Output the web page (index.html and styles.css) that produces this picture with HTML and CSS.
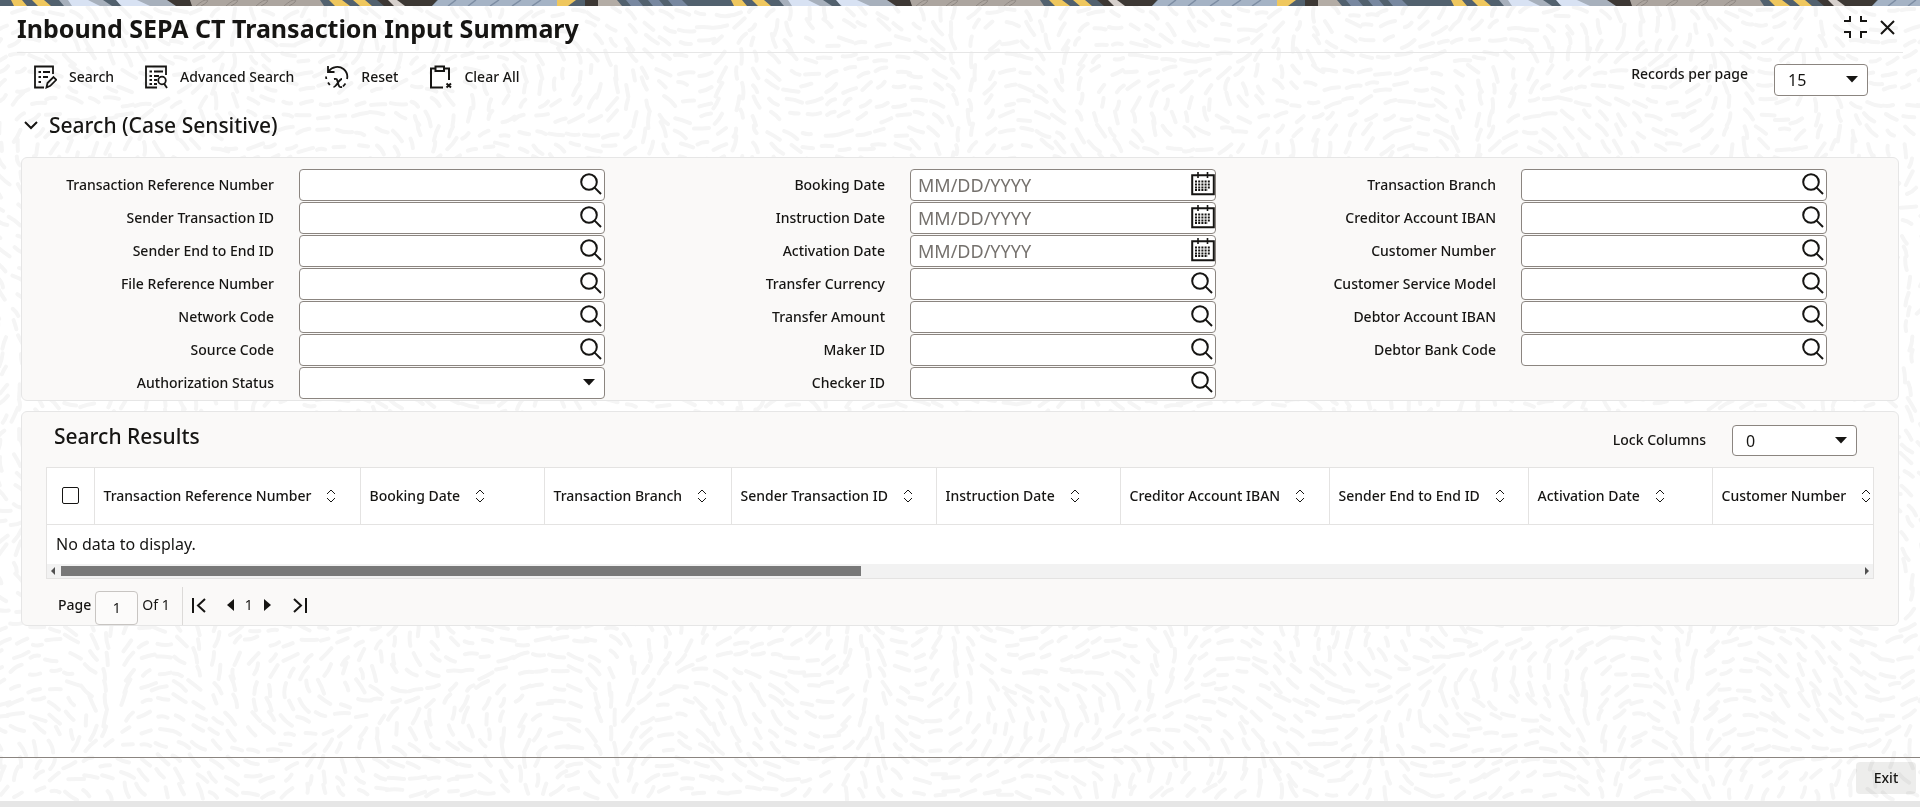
FILE: index.html
```html
<!DOCTYPE html>
<html lang="en">
<head>
  <meta charset="UTF-8">
  <meta name="viewport" content="width=device-width, initial-scale=1.0">
  <title>Inbound SEPA CT Transaction Input Summary</title>
  <link rel="stylesheet" href="styles.css">
</head>
<body>
  <!-- shared icons -->
  <svg class="sprite" aria-hidden="true">
    <symbol id="i-search" viewBox="0 0 22 22">
      <circle cx="9" cy="9" r="7.8"/>
      <path d="M14.6 14.6L21 21"/>
    </symbol>
    <symbol id="i-calendar" viewBox="0 0 24 24">
      <path d="M1.2 3.2h21.6v19H1.2z" stroke-width="2"/>
      <path d="M7 0v6M16.500 0v6" stroke-width="1.6"/>
      <path d="M4 9.500h16M4 12.500h16M4 15.500h16M4 18h13" stroke-dasharray="2 1.200" stroke-width="1.8"/>
    </symbol>
    <symbol id="i-caret" viewBox="0 0 12 7">
      <path d="M0 0h12L6 6.500z" fill="currentColor" stroke="none"/>
    </symbol>
    <symbol id="i-sort" viewBox="0 0 10 14">
      <path d="M1 5l4-4 4 4M1 9l4 4 4-4"/>
    </symbol>
  </svg>
  <svg class="backdrop" id="backdrop" aria-hidden="true"></svg>

  <svg class="strip" aria-hidden="true">
    <defs>
      <pattern id="strip-art" width="720" height="6" patternUnits="userSpaceOnUse">
        <path fill="#52616e" d="M0 0h720v6H0z"/>
        <path fill="#efc75e" d="M11 0h11l5 6H14zM32 0h12l7 6H38zM329 0h13l8 6H335zM353 0h12l7 6H360zM557 0h19l-8 6H557z"/>
        <path fill="#a7b0bc" d="M59 0h112l6 6H64z"/>
        <path fill="#d8e2f3" d="M68 0h20l12 6H72zM115 0h22l13 6H122z"/>
        <path fill="#52616e" d="M103 0h13l5 6H112z"/>
        <path fill="#3d3834" d="M167 0h23l3 6H176zM377 0h60l-5 6H384z"/>
        <path fill="#aca59f" d="M190 0h130l4 6H192z"/>
        <path fill="none" stroke="#8f8883" d="M196 6q8-7 11-6t-6 6M226 6q8-7 11-6t-6 6M256 6q8-7 11-6t-6 6M284 6q8-7 11-6t-6 6"/>
        <path fill="#d6d0cc" d="M388 0h9l8 6h-11z"/>
        <path fill="#a5b3c5" d="M438 0h119v6H432z"/>
        <path fill="none" stroke="#7d8da3" stroke-width="1.500" d="M448 6l8-6M468 6l8-6M490 6l9-6M512 6l9-6M532 6l9-6"/>
        <path fill="#3d3834" d="M585 0h13v6h-13z"/>
        <path fill="#b3aca5" d="M598 0h19l5 6h-24z"/>
        <path fill="#7888a0" d="M626 0h12l5 6h-12zM648 0h11l5 6h-11zM668 0h14l6 6h-15z"/>
      </pattern>
    </defs>
    <rect width="100%" height="6" fill="url(#strip-art)"/>
  </svg>

  <header class="header">
    <h1>Inbound SEPA CT Transaction Input Summary</h1>
    <div class="window-actions">
      <button type="button" aria-label="Restore">
        <svg width="24" height="24" viewBox="0 0 24 24" stroke-width="2"><path d="M0 6h6V1M23 6h-6V1M0 17h6v6M23 17h-6v6"/></svg>
      </button>
      <button type="button" aria-label="Close">
        <svg width="15" height="15" viewBox="0 0 15 15" stroke-width="2"><path d="M1 1l13 13M14 1L1 14"/></svg>
      </button>
    </div>
  </header>

  <div class="toolbar">
    <div class="tools">
      <button type="button">
        <svg width="23" height="24" viewBox="0 0 23 24" stroke-width="1.800">
          <path d="M19 9V1.500H1V22.500h9"/>
          <path d="M4.500 7h2.500M9 7h7M4.500 12h2.500M9 12h5M4.500 17h2.500"/>
          <path d="M12.500 22.500l1-4.500 6-6 2.800 2.800-6 6z"/>
        </svg>
        Search
      </button>
      <button type="button">
        <svg width="23" height="24" viewBox="0 0 23 24" stroke-width="1.800">
          <path d="M21 10V1.500H1V22.500h11"/>
          <path d="M4.500 6.500h2.500M9 6.500h9M4.500 11h2.500M9 11h5M4.500 15h2.500M9 15h3M4.500 19h2.500M9 19h3"/>
          <circle cx="17" cy="15.500" r="3.800"/>
          <path d="M19 18.500l3 4.500"/>
        </svg>
        Advanced Search
      </button>
      <button type="button">
        <svg width="24" height="24" viewBox="0 0 24 24" stroke-width="1.800">
          <path d="M3 1v6h6.500M3.500 6.500C7 1.500 14 .5 18.500 4c3 2.500 4.500 6 3.500 10"/>
          <path d="M20.500 18.500l-2.500 3M1 11.500l.3 2.500M3 17.500l1.800 2.500"/>
          <path d="M9 14c3-.5 3 0 4 4s1.500 4.500 4 4M17 14c-3 0-5.500 8-8.500 8"/>
        </svg>
        Reset
      </button>
      <button type="button">
        <svg width="23" height="24" viewBox="0 0 23 24" stroke-width="2">
          <path d="M6 3.500H2v19h12M15 3.500h5V15"/>
          <path d="M6.500 1.500h8.500v4.500H6.500z"/>
          <path d="M17.500 18.500l4.500 4M22 18.500l-4.500 4"/>
        </svg>
        Clear All
      </button>
    </div>
    <div class="records">
      <label for="records">Records per page</label>
      <div class="select-box small">
        <select id="records"><option>15</option></select>
        <svg class="caret" width="12" height="7"><use href="#i-caret"/></svg>
      </div>
    </div>
  </div>

  <main>
    <h2 class="section-title">
      <button type="button" aria-expanded="true">
        <svg width="14" height="9" viewBox="0 0 14 9" stroke-width="2"><path d="M1 1l6 6 6-6"/></svg>
        Search (Case Sensitive)
      </button>
    </h2>

    <form class="panel search-form">
      <div class="column">
        <div class="row"><label for="f1">Transaction Reference Number</label><div class="field"><input id="f1" type="text"><button type="button" aria-label="List of values"><svg><use href="#i-search"/></svg></button></div></div>
        <div class="row"><label for="f2">Sender Transaction ID</label><div class="field"><input id="f2" type="text"><button type="button" aria-label="List of values"><svg><use href="#i-search"/></svg></button></div></div>
        <div class="row"><label for="f3">Sender End to End ID</label><div class="field"><input id="f3" type="text"><button type="button" aria-label="List of values"><svg><use href="#i-search"/></svg></button></div></div>
        <div class="row"><label for="f4">File Reference Number</label><div class="field"><input id="f4" type="text"><button type="button" aria-label="List of values"><svg><use href="#i-search"/></svg></button></div></div>
        <div class="row"><label for="f5">Network Code</label><div class="field"><input id="f5" type="text"><button type="button" aria-label="List of values"><svg><use href="#i-search"/></svg></button></div></div>
        <div class="row"><label for="f6">Source Code</label><div class="field"><input id="f6" type="text"><button type="button" aria-label="List of values"><svg><use href="#i-search"/></svg></button></div></div>
        <div class="row"><label for="f7">Authorization Status</label><div class="select-box"><select id="f7"><option></option></select><svg class="caret" width="12" height="7"><use href="#i-caret"/></svg></div></div>
      </div>
      <div class="column">
        <div class="row"><label for="f8">Booking Date</label><div class="field"><input id="f8" type="text" placeholder="MM/DD/YYYY"><button type="button" class="date" aria-label="Pick a date"><svg><use href="#i-calendar"/></svg></button></div></div>
        <div class="row"><label for="f9">Instruction Date</label><div class="field"><input id="f9" type="text" placeholder="MM/DD/YYYY"><button type="button" class="date" aria-label="Pick a date"><svg><use href="#i-calendar"/></svg></button></div></div>
        <div class="row"><label for="f10">Activation Date</label><div class="field"><input id="f10" type="text" placeholder="MM/DD/YYYY"><button type="button" class="date" aria-label="Pick a date"><svg><use href="#i-calendar"/></svg></button></div></div>
        <div class="row"><label for="f11">Transfer Currency</label><div class="field"><input id="f11" type="text"><button type="button" aria-label="List of values"><svg><use href="#i-search"/></svg></button></div></div>
        <div class="row"><label for="f12">Transfer Amount</label><div class="field"><input id="f12" type="text"><button type="button" aria-label="List of values"><svg><use href="#i-search"/></svg></button></div></div>
        <div class="row"><label for="f13">Maker ID</label><div class="field"><input id="f13" type="text"><button type="button" aria-label="List of values"><svg><use href="#i-search"/></svg></button></div></div>
        <div class="row"><label for="f14">Checker ID</label><div class="field"><input id="f14" type="text"><button type="button" aria-label="List of values"><svg><use href="#i-search"/></svg></button></div></div>
      </div>
      <div class="column">
        <div class="row"><label for="f15">Transaction Branch</label><div class="field"><input id="f15" type="text"><button type="button" aria-label="List of values"><svg><use href="#i-search"/></svg></button></div></div>
        <div class="row"><label for="f16">Creditor Account IBAN</label><div class="field"><input id="f16" type="text"><button type="button" aria-label="List of values"><svg><use href="#i-search"/></svg></button></div></div>
        <div class="row"><label for="f17">Customer Number</label><div class="field"><input id="f17" type="text"><button type="button" aria-label="List of values"><svg><use href="#i-search"/></svg></button></div></div>
        <div class="row"><label for="f18">Customer Service Model</label><div class="field"><input id="f18" type="text"><button type="button" aria-label="List of values"><svg><use href="#i-search"/></svg></button></div></div>
        <div class="row"><label for="f19">Debtor Account IBAN</label><div class="field"><input id="f19" type="text"><button type="button" aria-label="List of values"><svg><use href="#i-search"/></svg></button></div></div>
        <div class="row"><label for="f20">Debtor Bank Code</label><div class="field"><input id="f20" type="text"><button type="button" aria-label="List of values"><svg><use href="#i-search"/></svg></button></div></div>
      </div>
    </form>

    <section class="panel results">
      <div class="results-head">
        <h2>Search Results</h2>
        <div class="lock">
          <label for="lock">Lock Columns</label>
          <div class="select-box">
            <select id="lock"><option>0</option></select>
            <svg class="caret" width="12" height="7"><use href="#i-caret"/></svg>
          </div>
        </div>
      </div>

      <div class="table-box">
        <div class="table-clip">
          <table>
            <colgroup>
              <col class="c-check"><col class="c-ref"><col class="c-date"><col class="c-branch"><col class="c-sender"><col class="c-date"><col class="c-iban"><col class="c-end"><col class="c-date"><col class="c-ref">
            </colgroup>
            <thead>
              <tr>
                <th><input type="checkbox" aria-label="Select all"></th>
                <th>Transaction Reference Number<svg><use href="#i-sort"/></svg></th>
                <th>Booking Date<svg><use href="#i-sort"/></svg></th>
                <th>Transaction Branch<svg><use href="#i-sort"/></svg></th>
                <th>Sender Transaction ID<svg><use href="#i-sort"/></svg></th>
                <th>Instruction Date<svg><use href="#i-sort"/></svg></th>
                <th>Creditor Account IBAN<svg><use href="#i-sort"/></svg></th>
                <th>Sender End to End ID<svg><use href="#i-sort"/></svg></th>
                <th>Activation Date<svg><use href="#i-sort"/></svg></th>
                <th>Customer Number<svg><use href="#i-sort"/></svg></th>
              </tr>
            </thead>
            <tbody>
              <tr><td colspan="10">No data to display.</td></tr>
            </tbody>
          </table>
        </div>
        <div class="scrollbar">
          <svg width="5" height="8" viewBox="0 0 5 8"><path d="M4 0v8L0 4z"/></svg>
          <div class="track"><div class="thumb"></div></div>
          <svg width="5" height="8" viewBox="0 0 5 8"><path d="M1 0v8l4-4z"/></svg>
        </div>
      </div>

      <div class="pager">
        <label for="page">Page</label>
        <input id="page" type="text" value="1">
        <span>Of 1</span>
        <div class="pager-nav">
          <button type="button" aria-label="First page"><svg width="14" height="15" viewBox="0 0 14 15" stroke-width="2"><path d="M1 0v15M13 1L6 7.500l7 6.500"/></svg></button>
          <button type="button" aria-label="Previous page"><svg width="7" height="12" viewBox="0 0 7 12"><path class="solid" d="M7 0v12L0 6z"/></svg></button>
          <span>1</span>
          <button type="button" aria-label="Next page"><svg width="7" height="12" viewBox="0 0 7 12"><path class="solid" d="M0 0v12l7-6z"/></svg></button>
          <button type="button" aria-label="Last page"><svg width="14" height="15" viewBox="0 0 14 15" stroke-width="2"><path d="M13 0v15M1 1l7 6.500L1 14"/></svg></button>
        </div>
      </div>
    </section>
  </main>

  <footer class="footer">
    <button type="button">Exit</button>
  </footer>

  <script src="backdrop.js"></script>
</body>
</html>
```
FILE: styles.css
```css
* {
  box-sizing: border-box;
}
body {
  display: flex;
  flex-direction: column;
  min-height: 100vh;
  margin: 0;
  background-color: #fff;
  color: #161513;
  font-family: "Noto Sans", "Open Sans", sans-serif;
  font-size: 14px;
  line-height: 20px;
}
h1, h2 {
  margin: 0;
}
button, input, select {
  margin: 0;
  padding: 0;
  border: none;
  background: none;
  color: inherit;
  font: inherit;
}
button {
  cursor: pointer;
}
button, label {
  font-weight: 500;
}
svg {
  display: block;
  flex: none;
  fill: none;
  stroke: currentColor;
}
.sprite {
  position: absolute;
  width: 0;
  height: 0;
}
.backdrop {
  position: fixed;
  inset: 0;
  z-index: -1;
  width: 100%;
  height: 100%;
  stroke: #f5f5f5;
  stroke-width: 4;
  stroke-linecap: round;
}
.strip {
  width: 100%;
  height: 6px;
  stroke: none;
}

/* title bar */
.header {
  display: flex;
  justify-content: space-between;
  height: 47px;
  margin: 0 17px;
  border-bottom: 1px solid #e6e6e6;
}
.header h1 {
  font-size: 25px;
  line-height: 44px;
  font-weight: 700;
}
.window-actions {
  display: flex;
  align-items: center;
  gap: 12px;
  padding: 0 8px 4px 0;
}

/* toolbar */
.toolbar {
  display: flex;
  justify-content: space-between;
  padding: 11px 52px 0 34px;
}
.tools {
  display: flex;
  gap: 31px;
}
.tools button {
  display: flex;
  align-items: center;
  gap: 12px;
  height: 26px;
}
.records, .lock {
  display: flex;
  gap: 26px;
}

/* fields */
.field, .select-box {
  display: flex;
  position: relative;
  height: 32px;
  border: 1px solid #8b8580;
  border-radius: 4px;
  background-color: #fff;
}
.field input {
  flex: 1;
  min-width: 0;
  padding: 0 7px;
  font-size: 18px;
}
.field input::placeholder {
  color: #75716d;
  opacity: 1;
}
.field button {
  padding: 0 2px 3px 0;
}
.field svg {
  width: 22px;
  height: 22px;
  stroke-width: 2;
}
.field .date {
  padding: 0 0 2px;
}
.field .date svg {
  width: 24px;
  height: 24px;
}
.select-box select {
  flex: 1;
  width: 100%;
  padding: 0 13px;
  appearance: none;
  font-size: 16px;
}
.select-box .caret {
  position: absolute;
  top: 11px;
  right: 9px;
  pointer-events: none;
}
.small {
  width: 94px;
}

.section-title {
  margin: 13px 24px 16px;
}
.section-title button {
  display: flex;
  align-items: center;
  gap: 11px;
  height: 32px;
  font-size: 21px;
}

.panel {
  margin: 0 21px 10px;
  border: 1px solid #e6e6e6;
  border-radius: 6px;
  background-color: #faf9f8;
}
.search-form {
  display: grid;
  grid-template-columns: repeat(3, 1fr);
  padding: 11px 32px 0 11px;
}
.column {
  display: flex;
  flex-direction: column;
  gap: 1px;
  padding: 0 39px 1px 0;
}
.row {
  display: flex;
}
.row label {
  flex: 1;
  padding-right: 25px;
  line-height: 31px;
  text-align: right;
  white-space: nowrap;
}
.row .field, .row .select-box {
  flex: 0 0 306px;
}

/* results */
.results {
  padding: 13px 24px 0;
}
.results-head {
  display: flex;
  justify-content: space-between;
  padding: 0 17px 11px 8px;
}
.results-head h2 {
  font-size: 21px;
  line-height: 22px;
  font-weight: 500;
}
.lock label {
  line-height: 30px;
}
.lock .select-box {
  width: 125px;
  height: 31px;
}
.table-box {
  border: 1px solid #e4e3e2;
  background-color: #fff;
}
.table-clip {
  overflow: hidden;
}
table {
  width: 100%;
  min-width: 1931px;
  border-collapse: collapse;
  table-layout: fixed;
}
th {
  height: 56px;
  padding: 0 0 0 9px;
  border-right: 1px solid #e4e3e2;
  border-bottom: 1px solid #e4e3e2;
  font-weight: 500;
  text-align: left;
  white-space: nowrap;
}
th svg {
  display: inline-block;
  width: 10px;
  height: 14px;
  margin-left: 15px;
  vertical-align: -2px;
}
th input {
  display: block;
  appearance: none;
  width: 17px;
  height: 17px;
  margin-left: 6px;
  border: 1px solid #161513;
  border-radius: 2px;
}
td {
  height: 40px;
  padding: 0 0 0 9px;
  font-size: 16px;
}
.c-check { width: 47px; }
.c-ref { width: 266px; }
.c-date { width: 184px; }
.c-branch { width: 187px; }
.c-sender { width: 205px; }
.c-iban { width: 209px; }
.c-end { width: 199px; }
.scrollbar {
  display: flex;
  align-items: center;
  height: 14px;
  padding: 0 4px;
  background-color: #f2f2f2;
}
.scrollbar svg {
  fill: #505050;
  stroke: none;
}
.track {
  flex: 1;
  padding: 0 5px;
}
.thumb {
  width: 44.500%;
  height: 10px;
  background-color: #787878;
}

.pager {
  display: flex;
  align-items: flex-start;
  padding: 8px 0 0 12px;
  line-height: 36px;
}
.pager input {
  width: 43px;
  height: 34px;
  margin: 4px 4px 0;
  border: 1px solid #c8c5c2;
  border-radius: 4px;
  background-color: #fcfbfa;
  text-align: center;
}
.pager-nav {
  display: flex;
  align-items: center;
  height: 38px;
  margin-left: 12px;
  padding: 0 0 2px 9px;
  border-left: 1px solid #dcdad8;
}
.pager-nav span {
  margin: 0 11px;
}
.pager-nav button:first-child {
  margin-right: 21px;
}
.pager-nav button:last-child {
  margin-left: 22px;
}
.solid {
  fill: #161513;
  stroke: none;
}

/* footer */
.footer {
  display: flex;
  justify-content: flex-end;
  height: 50px;
  margin-top: auto;
  padding: 4px 4px 0;
  border-top: 1px solid #8b8580;
  border-bottom: 6px solid #e6e6e6;
}
.footer button {
  width: 60px;
  height: 32px;
  border-radius: 4px;
  background-color: rgba(22, 21, 19, 0.08);
}
```
FILE: backdrop.js
```js
// Draws the short brush dashes behind the page, turned along a slow wave
var svg = document.getElementById('backdrop');
var seed = 7;

function random() {
  seed = (seed * 16807) % 2147483647;
  return seed / 2147483647;
}

var d = '';
for (var y = 12; y < window.innerHeight - 10; y += 15) {
  for (var x = 0; x < window.innerWidth + 16; x += 18) {
    var cx = x + random() * 9 - 4;
    var cy = y + random() * 8 - 4;
    var angle = 2.2 * Math.sin(cx / 83 + cy / 140) + 1.8 * Math.cos(cy / 71 - cx / 190) + random() * 0.5;
    var half = 4 + random() * 4;
    var dx = Math.cos(angle) * half;
    var dy = Math.sin(angle) * half;
    var bend = random() * 4 - 2;
    d += 'M' + (cx - dx).toFixed(1) + ' ' + (cy - dy).toFixed(1) +
      'Q' + (cx - dy / half * bend).toFixed(1) + ' ' + (cy + dx / half * bend).toFixed(1) +
      ' ' + (cx + dx).toFixed(1) + ' ' + (cy + dy).toFixed(1);
  }
}

var path = document.createElementNS('http://www.w3.org/2000/svg', 'path');
path.setAttribute('d', d);
svg.appendChild(path);
```
